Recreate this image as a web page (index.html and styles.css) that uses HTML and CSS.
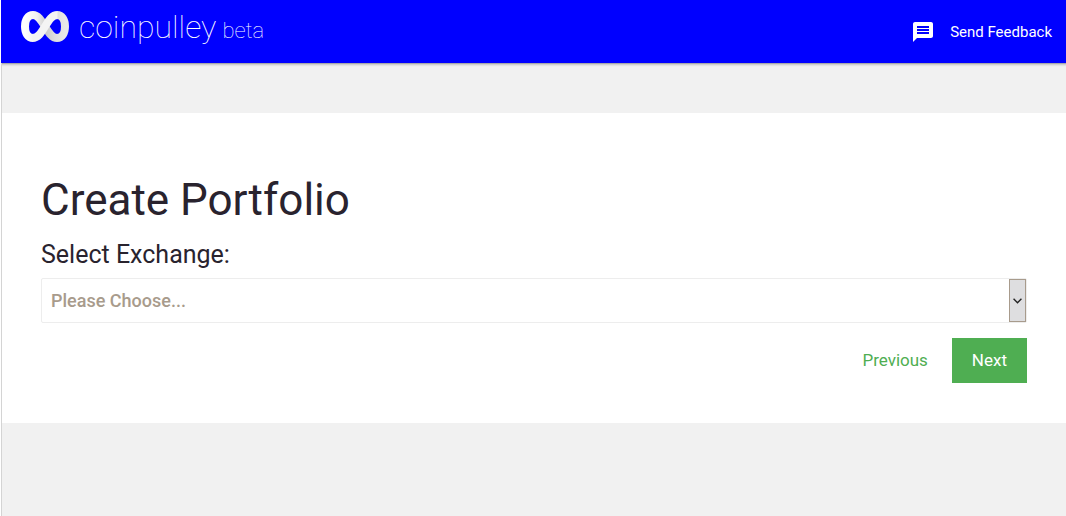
FILE: index.html
```html
<!DOCTYPE html>
<html lang="en">
<head>
<meta charset="utf-8">
<title>coinpulley beta</title>
<link rel="stylesheet" href="styles.css">
</head>
<body>
<header class="topbar">
  <a class="brand" href="#">
    <svg class="logo" viewBox="0 0 48 32" aria-hidden="true">
      <defs>
        <linearGradient id="left" x1="0" y1="0" x2="1" y2="0">
          <stop offset="0" stop-color="#fff"/>
          <stop offset="0.600" stop-color="#f0f0f0"/>
          <stop offset="1" stop-color="#cfcfcf"/>
        </linearGradient>
        <linearGradient id="right" x1="0" y1="0" x2="1" y2="0">
          <stop offset="0" stop-color="#cacaca"/>
          <stop offset="0.500" stop-color="#dedede"/>
          <stop offset="1" stop-color="#e8e8e8"/>
        </linearGradient>
      </defs>
      <path fill="none" stroke="url(#right)" stroke-width="8" d="M24 15.500C28 22 31 27 36 27c5 0 8-5 8-11.500S41 4 36 4"/>
      <path fill="none" stroke="url(#left)" stroke-width="8" d="M24 15.500C20 9 17 4 12 4S4 9 4 15.500 7 27 12 27"/>
      <path fill="none" stroke="#f4f4f4" stroke-width="8" d="M11.500 27C17 27 20 22 24 15.500S31 4 36.500 4"/>
    </svg>
    <span class="name">coinpulley</span>
    <span class="tag">beta</span>
  </a>
  <a class="feedback" href="#">
    <svg class="chat" viewBox="0 0 24 24" aria-hidden="true"><path fill="#fff" d="M20 2H4c-1.100 0-1.990.9-1.990 2L2 22l4-4h14c1.100 0 2-.9 2-2V4c0-1.100-.9-2-2-2ZM6 6h12v2H6V6Zm12 8H6v-2h12v2Zm0-3H6V9h12v2Z"/></svg>
    <span>Send Feedback</span>
  </a>
</header>
<main class="page">
  <form class="card">
    <h1 class="title">Create Portfolio</h1>
    <label class="label" for="exchange">Select Exchange:</label>
    <div class="field">
      <select class="select" id="exchange"><option>Please Choose...</option></select>
      <span class="arrow"><svg viewBox="0 0 8 5" aria-hidden="true"><path d="M0.500 0.500 4 4 7.500 0.500" fill="none" stroke="#222" stroke-width="1.200"/></svg></span>
    </div>
    <div class="actions">
      <button class="btn" type="button">Previous</button>
      <button class="btn primary" type="button">Next</button>
    </div>
  </form>
</main>
</body>
</html>
```
FILE: styles.css
```css
* { box-sizing: border-box; }

body {
  display: flex;
  flex-direction: column;
  margin: 0;
  min-height: 100vh;
  border-left: 1px solid #fff;
  background: #f1f1f1;
  color: #29232e;
  font-family: Roboto, "Liberation Sans", sans-serif;
}

.topbar {
  display: flex;
  align-items: flex-start;
  justify-content: space-between;
  height: 63px;
  padding: 0 14px 0 20px;
  background: #00f;
  box-shadow: 0 1px 0 #a8a8ac, 0 2px 0 #d0d0d0, 0 3px 1px #e2e2e2;
}

.brand,
.feedback {
  display: flex;
  color: #fff;
  text-decoration: none;
}

.brand {
  align-items: baseline;
  padding-top: 11px;
  font-weight: 100;
  line-height: 32px;
}

.logo {
  align-self: flex-start;
  width: 48px;
  height: 32px;
  margin-right: 10px;
}

.name {
  margin-right: 6px;
  font-size: 32px;
}

.tag { font-size: 22px; }

.feedback {
  align-items: center;
  gap: 15px;
  height: 63px;
  font-size: 15px;
}

.chat {
  width: 24px;
  height: 24px;
}

.page {
  flex: 1;
  padding-top: 50px;
  border-left: 1px solid #d4d4d4;
}

.card {
  padding: 60px 39px 40px;
  background: #fff;
}

.title {
  margin: 0;
  font-size: 44px;
  font-weight: 400;
  line-height: 54px;
}

.label {
  display: block;
  padding: 12px 0 7px;
  font-size: 25px;
  line-height: 32px;
}

.field {
  display: grid;
  height: 45px;
}

.select {
  grid-area: 1 / 1;
  width: 100%;
  padding: 0 9px;
  appearance: none;
  border: 1px solid #ededed;
  border-radius: 2px;
  background: #fff;
  color: #a89b8c;
  font: 500 18px Roboto, "Liberation Sans", sans-serif;
}

.arrow {
  grid-area: 1 / 1;
  display: flex;
  align-items: center;
  justify-content: center;
  justify-self: end;
  width: 17px;
  margin: 1px;
  border: 1px solid #a89b8c;
  background: #dedee0;
  pointer-events: none;
}

.arrow svg {
  width: 9px;
  height: 6px;
}

.actions {
  display: flex;
  justify-content: flex-end;
  gap: 4px;
  padding-top: 15px;
}

.btn {
  height: 45px;
  padding: 0 20px 2px;
  border: 0;
  background: transparent;
  color: #4fae52;
  font: 400 17px Roboto, "Liberation Sans", sans-serif;
}

.primary {
  background: #4fae52;
  color: #fff;
}
```
